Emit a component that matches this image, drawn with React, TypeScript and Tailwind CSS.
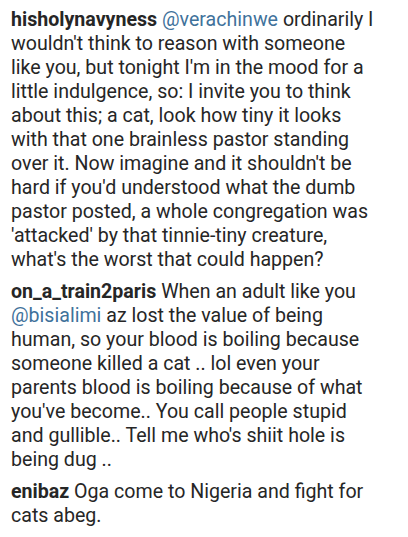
type Part = { text: string; mention?: boolean }

type Comment = {
  user: string
  // each inner array is one visual line, as wrapped in the original feed
  lines: Part[][]
}

const comments: Comment[] = [
  {
    user: "hisholynavyness",
    lines: [
      [{ text: "@verachinwe", mention: true }, { text: " ordinarily I" }],
      [{ text: "wouldn't think to reason with someone" }],
      [{ text: "like you, but tonight I'm in the mood for a" }],
      [{ text: "little indulgence, so: I invite you to think" }],
      [{ text: "about this; a cat, look how tiny it looks" }],
      [{ text: "with that one brainless pastor standing" }],
      [{ text: "over it. Now imagine and it shouldn't be" }],
      [{ text: "hard if you'd understood what the dumb" }],
      [{ text: "pastor posted, a whole congregation was" }],
      [{ text: "'attacked' by that tinnie-tiny creature," }],
      [{ text: "what's the worst that could happen?" }],
    ],
  },
  {
    user: "on_a_train2paris",
    lines: [
      [{ text: "When an adult like you" }],
      [{ text: "@bisialimi", mention: true }, { text: " az lost the value of being" }],
      [{ text: "human, so your blood is boiling because" }],
      [{ text: "someone killed a cat .. lol even your" }],
      [{ text: "parents blood is boiling because of what" }],
      [{ text: "you've become.. You call people stupid" }],
      [{ text: "and gullible.. Tell me who's shiit hole is" }],
      [{ text: "being dug .." }],
    ],
  },
  {
    user: "enibaz",
    lines: [[{ text: "Oga come to Nigeria and fight for" }], [{ text: "cats abeg." }]],
  },
]

export default function App() {
  return (
    <div
      className="min-h-screen bg-white pt-2 pl-[11px] pr-2 text-[19.6px] leading-[24px] text-[#262626]"
      style={{ fontFamily: "Roboto, 'Liberation Sans', sans-serif" }}
    >
      <ul className="space-y-2">
        {comments.map((c) => (
          <li key={c.user} className="whitespace-nowrap">
            <span className="font-bold">{c.user}</span>{" "}
            {c.lines.map((line, i) => (
              <span key={i}>
                {i > 0 && <br />}
                {line.map((p, j) =>
                  p.mention ? (
                    <a key={j} className="text-[#3f729b]">
                      {p.text}
                    </a>
                  ) : (
                    <span key={j}>{p.text}</span>
                  )
                )}
              </span>
            ))}
          </li>
        ))}
      </ul>
    </div>
  )
}
